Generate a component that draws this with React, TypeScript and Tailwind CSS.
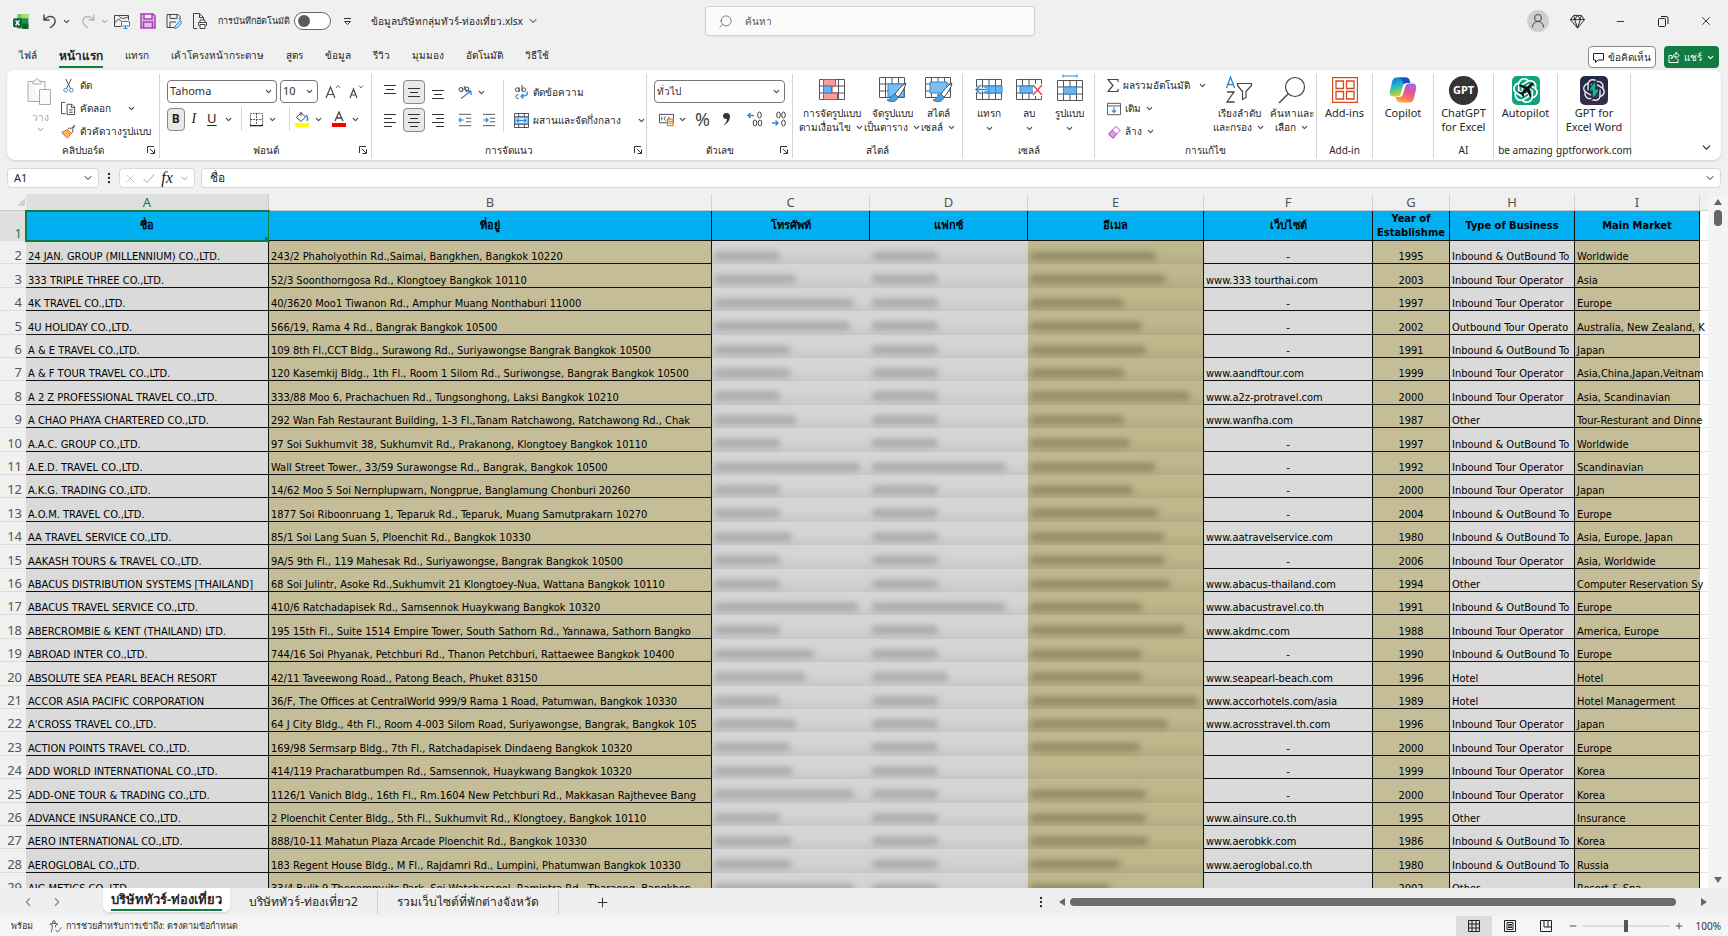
import { useState, type ReactNode } from "react";
import { ChevronDown, ChevronLeft, ChevronRight, Minus, MoreVertical, Plus, Search, X } from "lucide-react";
import { SiOpenai } from "react-icons/si";

type Row = {
  name: string;
  address: string;
  phone: number;
  fax: number;
  email: number;
  web: string;
  year: string;
  type: string;
  market: string;
  spill?: boolean;
};

const BOTH = "Inbound & OutBound To";
const IN = "Inbound Tour Operator";

const row = (
  name: string,
  address: string,
  [phone, fax, email]: [number, number, number],
  web: string,
  year: string,
  type: string,
  market: string,
  spill = false
): Row => ({ name, address, phone, fax, email, web, year, type, market, spill });

// phone / fax / email are hidden, so only the length of the masked value is kept
const ROWS: Row[] = [
  row("24 JAN. GROUP (MILLENNIUM) CO.,LTD.", "243/2 Phaholyothin Rd.,Saimai, Bangkhen, Bangkok 10220", [66, 66, 126], "-", "1995", BOTH, "Worldwide"),
  row("333 TRIPLE THREE CO.,LTD.", "52/3 Soonthorngosa Rd., Klongtoey Bangkok 10110", [82, 66, 136], "www.333 tourthai.com", "2003", IN, "Asia"),
  row("4K TRAVEL CO.,LTD.", "40/3620 Moo1 Tiwanon Rd., Amphur Muang Nonthaburi 11000", [140, 66, 94], "-", "1997", IN, "Europe"),
  row("4U HOLIDAY CO.,LTD.", "566/19, Rama 4 Rd., Bangrak Bangkok 10500", [136, 66, 112], "-", "2002", "Outbound Tour Operato", "Australia, New Zealand, K", true),
  row("A & E TRAVEL CO.,LTD.", "109 8th Fl.,CCT Bldg., Surawong Rd., Suriyawongse Bangrak Bangkok 10500", [76, 66, 116], "-", "1991", BOTH, "Japan"),
  row("A & F TOUR TRAVEL CO.,LTD.", "120 Kasemkij Bldg., 1th Fl., Room 1 Silom Rd., Suriwongse, Bangrak Bangkok 10500", [76, 66, 94], "www.aandftour.com", "1999", IN, "Asia,China,Japan,Veitnam", true),
  row("A 2 Z PROFESSIONAL TRAVEL CO.,LTD.", "333/88 Moo 6, Prachachuen Rd., Tungsonghong, Laksi Bangkok 10210", [66, 66, 160], "www.a2z-protravel.com", "2000", IN, "Asia, Scandinavian"),
  row("A CHAO PHAYA CHARTERED CO.,LTD.", "292 Wan Fah Restaurant Building, 1-3 Fl.,Tanam Ratchawong, Ratchawong Rd., Chak", [82, 66, 94], "www.wanfha.com", "1987", "Other", "Tour-Resturant and Dinne", true),
  row("A.A.C. GROUP CO.,LTD.", "97 Soi Sukhumvit 38, Sukhumvit Rd., Prakanong, Klongtoey Bangkok 10110", [66, 66, 100], "-", "1997", BOTH, "Worldwide"),
  row("A.E.D. TRAVEL CO.,LTD.", "Wall Street Tower., 33/59 Surawongse Rd., Bangrak, Bangkok 10500", [146, 134, 125], "-", "1992", IN, "Scandinavian"),
  row("A.K.G. TRADING CO.,LTD.", "14/62 Moo 5 Soi Nernplupwarn, Nongprue, Banglamung Chonburi 20260", [66, 66, 103], "-", "2000", IN, "Japan"),
  row("A.O.M. TRAVEL CO.,LTD.", "1877 Soi Riboonruang 1, Teparuk Rd., Teparuk, Muang Samutprakarn 10270", [66, 66, 128], "-", "2004", BOTH, "Europe"),
  row("AA TRAVEL SERVICE CO.,LTD.", "85/1 Soi Lang Suan 5, Ploenchit Rd., Bangkok 10330", [78, 66, 134], "www.aatravelservice.com", "1980", BOTH, "Asia, Europe, Japan"),
  row("AAKASH TOURS & TRAVEL CO.,LTD.", "9A/5 9th Fl., 119 Mahesak Rd., Suriyawongse, Bangrak Bangkok 10500", [66, 66, 135], "-", "2006", IN, "Asia, Worldwide"),
  row("ABACUS DISTRIBUTION SYSTEMS [THAILAND]", "68 Soi Julintr, Asoke Rd.,Sukhumvit 21 Klongtoey-Nua, Wattana Bangkok 10110", [66, 66, 140], "www.abacus-thailand.com", "1994", "Other", "Computer Reservation Sy", true),
  row("ABACUS TRAVEL SERVICE CO.,LTD.", "410/6 Ratchadapisek Rd., Samsennok Huaykwang Bangkok 10320", [144, 134, 112], "www.abacustravel.co.th", "1991", BOTH, "Europe"),
  row("ABERCROMBIE & KENT (THAILAND) LTD.", "195 15th Fl., Suite 1514 Empire Tower, South Sathorn Rd., Yannawa, Sathorn Bangko", [66, 66, 155], "www.akdmc.com", "1988", IN, "America, Europe"),
  row("ABROAD INTER CO.,LTD.", "744/16 Soi Phyanak, Petchburi Rd., Thanon Petchburi, Rattaewee Bangkok 10400", [100, 66, 112], "-", "1990", BOTH, "Europe"),
  row("ABSOLUTE SEA PEARL BEACH RESORT", "42/11 Taveewong Road., Patong Beach, Phuket 83150", [92, 76, 112], "www.seapearl-beach.com", "1996", "Hotel", "Hotel"),
  row("ACCOR ASIA PACIFIC CORPORATION", "36/F, The Offices at CentralWorld 999/9 Rama 1 Road, Patumwan, Bangkok 10330", [66, 66, 168], "www.accorhotels.com/asia", "1989", "Hotel", "Hotel Managerment"),
  row("A'CROSS TRAVEL CO.,LTD.", "64 J City Bldg., 4th Fl., Room 4-003 Silom Road, Suriyawongse, Bangrak, Bangkok 105", [82, 66, 138], "www.acrosstravel.th.com", "1996", IN, "Japan"),
  row("ACTION POINTS TRAVEL CO.,LTD.", "169/98 Sermsarp Bldg., 7th Fl., Ratchadapisek Dindaeng Bangkok 10320", [76, 66, 110], "-", "2000", IN, "Europe"),
  row("ADD WORLD INTERNATIONAL CO.,LTD.", "414/119 Pracharatbumpen Rd., Samsennok, Huaykwang Bangkok 10320", [78, 66, 0], "-", "1999", IN, "Korea"),
  row("ADD-ONE TOUR & TRADING CO.,LTD.", "1126/1 Vanich Bldg., 16th Fl., Rm.1604 New Petchburi Rd., Makkasan Rajthevee Bang", [140, 66, 116], "-", "2000", IN, "Korea"),
  row("ADVANCE INSURANCE CO.,LTD.", "2 Ploenchit Center Bldg., 5th Fl., Sukhumvit Rd., Klongtoey, Bangkok 10110", [66, 66, 116], "www.ainsure.co.th", "1995", "Other", "Insurance"),
  row("AERO INTERNATIONAL CO.,LTD.", "888/10-11 Mahatun Plaza Arcade Ploenchit Rd., Bangkok 10330", [78, 66, 118], "www.aerobkk.com", "1986", BOTH, "Korea"),
  row("AEROGLOBAL CO.,LTD.", "183 Regent House Bldg., M Fl., Rajdamri Rd., Lumpini, Phatumwan Bangkok 10330", [78, 66, 90], "www.aeroglobal.co.th", "1980", BOTH, "Russia"),
  row("AIG METICS CO.,LTD.", "33/4 Bulit 9 Thepommuits Park, Soi Watcharapol, Ramintra Rd., Tharaeng, Bangkhen,", [140, 66, 80], "", "2002", "Other", "Resort & Spa"),
];

const HEADERS = ["ชื่อ", "ที่อยู่", "โทรศัพท์", "แฟกซ์", "อีเมล", "เว็บไซต์", "Year of Establishme", "Type of Business", "Main Market"];
const LETTERS = ["A", "B", "C", "D", "E", "F", "G", "H", "I"];
const MENU = ["ไฟล์", "หน้าแรก", "แทรก", "เค้าโครงหน้ากระดาษ", "สูตร", "ข้อมูล", "รีวิว", "มุมมอง", "อัตโนมัติ", "วิธีใช้"];
const SHEETS = ["บริษัททัวร์-ท่องเที่ยว", "บริษัททัวร์-ท่องเที่ยว2", "รวมเว็บไซต์ที่พักต่างจังหวัด"];

type IconProps = { size?: number; className?: string; box?: string; children: ReactNode; w?: number };

const Ic = ({ size = 16, w, className = "", box = "0 0 16 16", children }: IconProps) => (
  <svg width={w ?? size} height={size} viewBox={box} className={`shrink-0 ${className}`} fill="none" stroke="#444" strokeWidth="1" aria-hidden="true">
    {children}
  </svg>
);

const Chev = ({ className = "" }: { className?: string }) => (
  <ChevronDown size={9} strokeWidth={3} className={`shrink-0 text-[#444] ${className}`} aria-hidden="true" />
);

const Btn = ({ label, className = "", children }: { label: string; className?: string; children: ReactNode }) => (
  <button aria-label={label} className={`flex shrink-0 items-center justify-center rounded hover:bg-gray-200 ${className}`}>
    {children}
  </button>
);

const Select = ({ label, value, className = "" }: { label: string; value: string; className?: string }) => (
  <span className={`relative flex items-center ${className}`}>
    <select aria-label={label} className="h-[23px] w-full appearance-none rounded border border-[#777] bg-white px-0.5 text-[#333] outline-none">
      <option>{value}</option>
    </select>
    <Chev className="pointer-events-none absolute right-1" />
  </span>
);

const Group = ({ label, launcher, className = "", children }: { label: string; launcher?: boolean; className?: string; children: ReactNode }) => (
  <section className={`relative flex shrink-0 flex-col border-r border-[#d4d4d4] ${className}`}>
    <div className="min-h-0 flex-1">{children}</div>
    <div className="flex h-4 items-center justify-center whitespace-nowrap text-[10px] leading-4">{label}</div>
    {launcher && (
      <button aria-label={`${label} …`} className="absolute right-1 bottom-1">
        <Ic size={8} box="0 0 8 8">
          <path d="M.5 7V.5H7M3 3l4 4M7.5 3.5v4h-4" stroke="#333" />
        </Ic>
      </button>
    )}
  </section>
);

type BigProps = { icon: ReactNode; lines: string[]; chevron?: boolean; below?: boolean; latin?: boolean; className?: string };

const BigButton = ({ icon, lines, chevron, below, latin, className = "" }: BigProps) => (
  <button className={`flex flex-col items-center rounded leading-[14px] whitespace-nowrap hover:bg-gray-100 ${latin ? "text-[11px]" : "text-[10px]"} ${className}`}>
    <span className="flex h-8 items-center">{icon}</span>
    {lines.map((line, i) => (
      <span key={line} className="flex items-center gap-1">
        {line}
        {chevron && i === lines.length - 1 && <Chev />}
      </span>
    ))}
    {below && <Chev className="mt-1" />}
  </button>
);

const Lines = ({ kind }: { kind: "left" | "center" | "right" | "top" | "middle" | "bottom" }) => {
  const paths = {
    left: "M1 2.5h12M1 6.5h8M1 10.5h12M1 14.5h8",
    center: "M1 2.5h12M3 6.5h8M1 10.5h12M3 14.5h8",
    right: "M1 2.5h12M5 6.5h8M1 10.5h12M5 14.5h8",
    top: "M1 1.5h12M3 5.5h8M1 9.5h12",
    middle: "M1 4.5h12M3 8.5h8M1 12.5h12",
    bottom: "M1 6.5h12M3 10.5h8M1 14.5h12",
  };
  return (
    <Ic size={16} w={14} box="0 0 14 16">
      <path d={paths[kind]} stroke="#333" />
    </Ic>
  );
};

const GridBase = () => <path d="M.5.5h25v20H.5zM.5 7h25M.5 14h25M6.5.5v20M13 .5v20M19.5.5v20" stroke="#555" />;

const Brush = () => (
  <g>
    <path d="M27 6c-4 2-9 8-11 11l3 3c3-3 7-9 8-14z" fill="#fff" stroke="#444" />
    <path d="M16 17c-4 0-3 5-8 6 4 3 10 2 11-3z" fill="#4ba0e0" stroke="#1e7ac4" />
  </g>
);

const CondIcon = () => (
  <Ic size={22} w={26} box="0 0 26 22">
    <GridBase />
    <path d="M4.5.5h12V7h-12zM4.5 14h14v6.500h-14z" fill="#ff9a9a" stroke="#e03c3c" />
    <path d="M4.500 7h8v7h-8z" fill="#6bb5ef" stroke="#2e86d1" />
  </Ic>
);

const TableIcon = () => (
  <Ic size={26} w={28} box="0 0 28 26">
    <GridBase />
    <path d="M9 7h16v13H9z" fill="#7fbdf0" stroke="#2e86d1" />
    <Brush />
  </Ic>
);

const CellStyleIcon = () => (
  <Ic size={26} w={28} box="0 0 28 26">
    <GridBase />
    <path d="M5 5h17v11H5z" fill="#7fbdf0" stroke="#2e86d1" />
    <Brush />
  </Ic>
);

const InsertIcon = () => (
  <Ic size={22} w={28} box="-1 0 28 22">
    <GridBase />
    <path d="M9 7h17v7H9z" fill="#6bb5ef" stroke="#2e86d1" />
    <path d="M13 7v7M19.500 7v7" stroke="#2e86d1" />
    <path d="M10 10.500H0M5 6l-5 4.500L5 15" stroke="#fff" strokeWidth="3" />
    <path d="M10 10.500H0M5 6l-5 4.500L5 15" stroke="#2e86d1" strokeWidth="1.400" />
  </Ic>
);

const DeleteIcon = () => (
  <Ic size={22} w={27} box="0 0 27 22">
    <GridBase />
    <path d="M4 7h12l3 3.500L16 14H4z" fill="#6bb5ef" stroke="#2e86d1" />
    <path d="M17 5h10v12H17z" fill="#fff" stroke="none" />
    <path d="M17 6l9 10M26 6l-9 10" stroke="#f04848" strokeWidth="1.500" />
  </Ic>
);

const FormatIcon = () => (
  <Ic size={28} w={26} box="0 -6 26 28" className="-mt-1">
    <GridBase />
    <path d="M6.500 7h13v7h-13z" fill="#6bb5ef" stroke="#2e86d1" />
    <path d="M6 -4h14M6 -5.500v3M20 -5.500v3" stroke="#2e86d1" />
  </Ic>
);

const CopilotIcon = () => (
  <svg width="28" height="28" viewBox="0 0 28 28" aria-hidden="true">
    <defs>
      <linearGradient id="cpA" x1="0" y1="0" x2="0.300" y2="1">
        <stop offset="0" stopColor="#0a6fd8" />
        <stop offset="0.450" stopColor="#1fb2d6" />
        <stop offset="0.750" stopColor="#6ccf6e" />
        <stop offset="1" stopColor="#f0c419" />
      </linearGradient>
      <linearGradient id="cpB" x1="0.700" y1="0" x2="0.300" y2="1">
        <stop offset="0" stopColor="#a566e8" />
        <stop offset="0.400" stopColor="#e0559b" />
        <stop offset="0.750" stopColor="#fa7a4e" />
        <stop offset="1" stopColor="#ffb03a" />
      </linearGradient>
    </defs>
    <path d="M8 1.500h9c2 0 3 1 3.600 3l.8 2.500h-3.500c-2.200 0-3.300 1-3.900 3l-2.200 7.500c-.6 2-1.600 3-3.300 3H4.600C1.300 20.500.200 18 1 14.800l2-8.800c.7-3 2-4.500 5-4.500z" fill="url(#cpA)" />
    <path d="M8 1.500h9c2 0 3 1 3.600 3l.8 2.500h-3.500c-1.400 0-2.300.4-3 1.200L12.600 4c-.7-1.700-2.300-2.500-4.600-2.500z" fill="#1450c8" />
    <path d="M20 26.500h-9c-2 0-3-1-3.600-3L6.600 21h3.500c2.200 0 3.300-1 3.900-3l2.200-7.500c.6-2 1.600-3 3.300-3h3.900c3.300 0 4.400 2.500 3.600 5.700l-2 8.800c-.7 3-2 4.500-5 4.500z" fill="url(#cpB)" />
  </svg>
);

const AutopilotIcon = () => (
  <span className="relative flex h-[29px] w-7 items-center justify-center rounded-[5px] bg-[#12a37f]">
    <SiOpenai size={25} className="text-white" aria-hidden="true" />
    <svg width="18" height="18" viewBox="6 5.500 16 16" className="absolute" aria-hidden="true">
      <path d="M20.500 7.500c-.7-.7-2-.3-3 .7l-2.300 2.300-6.700-1.800-1 1 5.500 3-2.800 2.900-2-.4-.8.8 2.600 1.500 1.500 2.600.8-.8-.3-2 2.800-2.800 3 5.500 1-1-1.700-6.800 2.300-2.200c1-1 1.700-1.900 1.100-2.500z" fill="#111" />
    </svg>
  </span>
);

const GptWordIcon = () => (
  <span className="relative flex h-[29px] w-7 items-center justify-center rounded-[5px] bg-linear-to-b from-[#1f2a45] to-[#3b2c4a]">
    <SiOpenai size={22} className="text-[#e4e8ee]" aria-hidden="true" />
    <svg width="12" height="22" viewBox="8 3 12 20" className="absolute" aria-hidden="true">
      <path d="M16 4v8l3-1c0 5-2 8-7 11v-8l-3 1c0-5 3-8 7-11z" fill="#18b88a" stroke="#232a45" strokeWidth="1.500" />
    </svg>
  </span>
);

function TitleBar() {
  return (
    <header className="flex h-[42px] shrink-0 items-center">
      <div className="flex flex-1 items-center pl-[13px]">
        <Ic size={17}>
          <path d="M4 1h10.500v4H4z" fill="#5fd068" stroke="none" />
          <path d="M8 1h6.500v5H8z" fill="#a5e06a" stroke="none" />
          <path d="M4 5h10.500v9.500H4z" fill="#1f8f4a" stroke="none" />
          <path d="M9 10h5.500v5H9z" fill="#0f5f30" stroke="none" />
          <rect x="0" y="5" width="8.500" height="8.500" rx="1.500" fill="#0e6b37" stroke="none" />
          <path d="M2.500 7l3.500 4.500M6 7l-3.500 4.500" stroke="#fff" strokeWidth="1.300" />
        </Ic>
        <Btn label="Undo" className="ml-3 h-6 w-4">
          <Ic size={16}>
            <path d="M2 1.500v5.500h5.500M2.300 6.700C5 3.500 9 2.500 11.500 4.500c3 2.500 1.500 6 0 7.500L8 15" strokeWidth="1.400" />
          </Ic>
        </Btn>
        <Btn label="Undo list" className="ml-0.5 h-6 w-3"><Chev /></Btn>
        <Btn label="Redo" className="ml-2 h-6 w-4">
          <Ic size={16}>
            <path d="M14 1.500v5.500H8.500M13.700 6.700C11 3.500 7 2.500 4.500 4.500c-3 2.500-1.500 6 0 7.500L8 15" stroke="#b5b5b5" strokeWidth="1.400" />
          </Ic>
        </Btn>
        <Btn label="Redo list" className="ml-0.5 h-6 w-3"><Chev className="opacity-40" /></Btn>
        <Btn label="Picture" className="ml-1 h-6 w-4">
          <Ic size={16}>
            <path d="M7 13.500H.5V2.500h14V7M.5 10l4-4 3 2.500M5 2.500C6 6 10 6 14 4" />
            <path d="M7.500 8.500h8v4.500h-8zM11.500 13v2M9.500 15.500h4" fill="#fff" stroke="#2e86d1" />
          </Ic>
        </Btn>
        <Btn label="Save" className="ml-2 h-6 w-5">
          <Ic size={16}>
            <path d="M1 1h12l2 2v12H1zM4 1v5h8V1M3.500 15V9h9v6" fill="#e9b8ee" stroke="#a83cb8" strokeWidth="1.500" />
          </Ic>
        </Btn>
        <Btn label="Save as" className="ml-2 h-6 w-4">
          <Ic size={16}>
            <path d="M8 14.500H1v-13h11l2 2V7M4 1.500v4h7v-4M4 14v-5h6" />
            <path d="M14.500 7.500l-5 5-1 3 3-1 4.500-5z" fill="#b9dcf7" stroke="#2e86d1" />
          </Ic>
        </Btn>
        <Btn label="Print preview" className="ml-2 h-6 w-5">
          <Ic size={16}>
            <path d="M5 15.500H1.500V.5h6l4 4V7M7.500.5v4h4" />
            <path d="M7.500 12.500h-1v-3h8v3h-1M8 9V7h5v2M8 11.500h5v4H8z" fill="#fff" />
          </Ic>
        </Btn>
        <label className="ml-2 flex items-center gap-1 whitespace-nowrap text-[9px]">
          การบันทึกอัตโนมัติ
          <input type="checkbox" className="peer sr-only" />
          <span className="flex h-[18px] w-[37px] items-center rounded-full border border-[#666] bg-white px-[3px]">
            <span className="h-3 w-3 rounded-full bg-[#5c5c5c]" />
          </span>
        </label>
        <Btn label="Customize" className="ml-2 h-6 w-4">
          <Ic size={9} box="0 0 9 9"><path d="M1 1.500h7M1.500 4.500l3 3 3-3z" stroke="#333" /></Ic>
        </Btn>
        <button className="ml-4 flex items-center gap-1 whitespace-nowrap text-[10px]">
          ข้อมูลบริษัทกลุ่มทัวร์-ท่องเที่ยว.xlsx
          <ChevronDown size={12} />
        </button>
      </div>
      <label className="ml-[6px] flex h-[30px] w-[330px] shrink items-center gap-3 rounded border border-[#d2d2d2] bg-[#fbfbfb] px-3 shadow-xs">
        <Search size={15} strokeWidth={1.200} className="-scale-x-100 text-[#555]" />
        <input aria-label="ค้นหา" placeholder="ค้นหา" className="min-w-0 flex-1 bg-transparent text-[10px] outline-none placeholder:text-[#555]" />
      </label>
      <div className="flex flex-1 items-center justify-end gap-[13px] pr-[7px]">
        <Btn label="Account" className="size-[22px] rounded-full bg-[#cfcfcf]">
          <Ic size={16}><circle cx="8" cy="5" r="3.500" /><path d="M2.500 14.500c0-8 11-8 11 0" /></Ic>
        </Btn>
        <Btn label="Premium" className="h-7 w-[30px]">
          <Ic size={15}><path d="M4 1.500h8L15.500 6 8 15 .5 6zM.5 6h15M4 1.500L5 6l3 9 3-9 1-4.500M8 1.500L5 6M8 1.500L11 6" stroke="#222" /></Ic>
        </Btn>
        <Btn label="Minimize" className="h-7 w-[30px]"><Minus size={11} strokeWidth={2} /></Btn>
        <Btn label="Restore" className="h-7 w-[30px]">
          <Ic size={11} box="0 0 11 11"><path d="M.5 3.500a1 1 0 0 1 1-1h5a1 1 0 0 1 1 1v6a1 1 0 0 1-1 1h-5a1 1 0 0 1-1-1zM3 .5h5a2 2 0 0 1 2 2V8" stroke="#222" /></Ic>
        </Btn>
        <Btn label="Close" className="h-7 w-[30px]"><X size={14} strokeWidth={1.500} /></Btn>
      </div>
    </header>
  );
}

function MenuBar({ tab, setTab }: { tab: string; setTab: (t: string) => void }) {
  return (
    <nav className="flex h-7 shrink-0 items-end pr-[9px] pb-0.5 pl-[19px]">
      <div className="flex items-center gap-[22px]">
        {MENU.map((m) => (
          <button
            key={m}
            onClick={() => setTab(m)}
            className={`h-[23px] whitespace-nowrap border-b-2 ${m === tab ? "border-[#107c41] text-xs font-bold" : "border-transparent text-[10px]"}`}
          >
            {m}
          </button>
        ))}
      </div>
      <div className="ml-auto flex gap-2 text-[10px] font-medium">
        <button className="flex h-[22px] items-center gap-1 rounded border border-[#8a8a8a] bg-white px-1 whitespace-nowrap">
          <Ic size={11} box="0 0 11 11"><path d="M.5 1.500h10v6.500H5l-2.500 2.500V8h-2z" stroke="#222" /></Ic>
          ข้อคิดเห็น
        </button>
        <button className="flex h-[22px] items-center gap-1 rounded bg-[#107c41] px-1 whitespace-nowrap text-white">
          <Ic size={12} box="0 0 12 12"><path d="M4 4.500H1v7h9V8M3.500 8c0-3 2-4.500 4.500-4.500V1L11 4.500 8 7.500V5.500C6 5.500 4.500 6 3.500 8z" stroke="#fff" /></Ic>
          แชร์
          <ChevronDown size={9} strokeWidth={3} aria-hidden="true" />
        </button>
      </div>
    </nav>
  );
}

function Ribbon() {
  return (
    <div className="mx-[7px] flex h-[90px] shrink-0 overflow-hidden rounded-lg bg-white pt-1 pb-0.5 shadow-sm">
      <Group label="คลิปบอร์ด" launcher className="w-[153px]">
        <div className="flex text-[10px]">
          <button className="flex w-[54px] flex-col items-center pt-1 pl-3 text-[#a8a8a8]">
            <Ic size={28} w={26} box="0 0 26 28">
              <path d="M6 3.500H1v20h11M18 11V3.500h-4.500M6 6V3h2c0-3 4-3 4 0h2v3z" stroke="#aaa" fill="#f7f7f7" />
              <path d="M12.500 11.500h11v15h-11z" stroke="#aaa" fill="#fafafa" />
            </Ic>
            <span className="mt-1">วาง</span>
            <Chev className="opacity-40" />
          </button>
          <div className="flex flex-1 flex-col">
            <button className="flex h-[23px] items-center gap-1 whitespace-nowrap">
              <Ic size={15}>
                <path d="M5 1l5 10M11 1L6 11" />
                <circle cx="5" cy="13" r="2" stroke="#2e86d1" /><circle cx="11" cy="13" r="2" stroke="#2e86d1" />
              </Ic>
              ตัด
            </button>
            <button className="flex h-[23px] items-center gap-1 whitespace-nowrap">
              <Ic size={15}>
                <path d="M5 13.500H.5v-12h4M6.500 3.500h5l3 3v8h-8zM11 3.500v3.500h3.500M8.500 9.500h4M8.500 12h4" />
              </Ic>
              คัดลอก
              <Chev className="ml-3" />
            </button>
            <button className="flex h-[23px] items-center gap-1 whitespace-nowrap">
              <Ic size={15}>
                <path d="M14.500 1.500l-4 3.500-1.500-1-2 2 4 4 2-2-1-1.500z" />
                <path d="M7 6L1 8.500C2 11 4 13 7 15l4-5z" fill="#fbb36b" stroke="#d87414" />
              </Ic>
              ตัวคัดวางรูปแบบ
            </button>
          </div>
        </div>
      </Group>

      <Group label="ฟอนต์" launcher className="w-[212px]">
        <div className="flex flex-col gap-1 px-[7px] pt-[6px]">
          <div className="flex h-[23px] items-center gap-[3px] text-[11px]">
            <Select label="Font" value="Tahoma" className="w-[110px]" />
            <Select label="Font size" value="10" className="w-[38px]" />
            <Btn label="Grow font" className="ml-1 h-5 w-4">
              <Ic size={16}><path d="M1 14L5.500 3 10 14M2.500 10.500h6" strokeWidth="1.200" /><path d="M11 4l2-2.500L15 4" stroke="#2e86d1" /></Ic>
            </Btn>
            <Btn label="Shrink font" className="ml-1 h-5 w-4">
              <Ic size={16}><path d="M2 14L5.500 5 9 14M3.500 11h4" strokeWidth="1.200" /><path d="M11 1.500L13 4l2-2.500" stroke="#2e86d1" /></Ic>
            </Btn>
          </div>
          <div className="flex h-6 items-center">
            <button aria-label="Bold" className="h-[23px] w-[22px] rounded border border-[#888] bg-[#e8e8e8] text-xs font-bold">B</button>
            <button aria-label="Italic" className="w-6 font-['Liberation_Serif',serif] text-sm italic">I</button>
            <button aria-label="Underline" className="w-[22px] text-[13px] underline underline-offset-2">U</button>
            <Chev className="mr-2 ml-1" />
            <span className="h-6 w-px bg-[#d4d4d4]" />
            <Btn label="Borders" className="ml-1.5 h-5 w-4">
              <Ic size={15}><path d="M1.500 14V1.500h13V14M8 1.500v12M1.500 8h13" strokeDasharray="2 1" /><path d="M1 14.500h14" stroke="#222" strokeWidth="1.500" /></Ic>
            </Btn>
            <Chev className="mr-3 ml-1" />
            <span className="h-6 w-px bg-[#d4d4d4]" />
            <Btn label="Fill color" className="ml-1 h-5 w-4">
              <Ic size={16}><path d="M7 1.500L2.500 6.500 7 10.500l4.500-4.500zM7 1v4" /><path d="M12 4c2 2 2 4 1 6" stroke="#2e86d1" strokeWidth="1.500" /><path d="M1 12h14v4H1z" fill="#ff0" stroke="none" /></Ic>
            </Btn>
            <Chev className="mx-1" />
            <Btn label="Font color" className="ml-1 h-5 w-4">
              <Ic size={16}><path d="M4 10l4-9 4 9M5.500 7h5" strokeWidth="1.300" /><path d="M1 12h14v4H1z" fill="#f00" stroke="none" /></Ic>
            </Btn>
            <Chev className="mx-1" />
          </div>
        </div>
      </Group>

      <Group label="การจัดแนว" launcher className="w-[275px]">
        <div className="grid grid-cols-[132px_1fr] pt-[6px]">
          <div className="flex flex-col gap-1 border-r border-[#d4d4d4] pl-[7px]">
            <div className="flex h-6 items-center">
              <Btn label="Top" className="h-6 w-[22px]"><Lines kind="top" /></Btn>
              <Btn label="Middle" className="mx-0.5 h-6 w-[22px] border border-[#888] bg-[#e8e8e8]"><Lines kind="middle" /></Btn>
              <Btn label="Bottom" className="h-6 w-[22px]"><Lines kind="bottom" /></Btn>
              <Btn label="Orientation" className="ml-2 h-6 w-4">
                <Ic size={16}>
                  <circle cx="4" cy="5.500" r="2" /><path d="M6 4.500L5 8" /><path d="M7 2l3 6" /><circle cx="9.800" cy="5" r="2" />
                  <path d="M4 14.500L14 7M14 7h-4M14 7v4" stroke="#2e86d1" strokeWidth="1.300" />
                </Ic>
              </Btn>
              <Chev className="ml-1" />
            </div>
            <div className="flex h-6 items-center">
              <Btn label="Align left" className="h-6 w-[22px]"><Lines kind="left" /></Btn>
              <Btn label="Align center" className="mx-0.5 h-6 w-[22px] border border-[#888] bg-[#e8e8e8]"><Lines kind="center" /></Btn>
              <Btn label="Align right" className="h-6 w-[22px]"><Lines kind="right" /></Btn>
              <Btn label="Decrease indent" className="ml-2 h-6 w-4">
                <Ic size={14}><path d="M1 1.500h14M9 6h6M9 10h6M1 14.500h14" /><path d="M7 8H1M3.500 5.500L1 8l2.500 2.500" stroke="#2e86d1" strokeWidth="1.400" /></Ic>
              </Btn>
              <Btn label="Increase indent" className="ml-2 h-6 w-4">
                <Ic size={14}><path d="M1 1.500h14M9 6h6M9 10h6M1 14.500h14" /><path d="M1 8h6M4.500 5.500L7 8l-2.500 2.500" stroke="#2e86d1" strokeWidth="1.400" /></Ic>
              </Btn>
            </div>
          </div>
          <div className="flex flex-col gap-1 pl-2.5 text-[10px] whitespace-nowrap">
            <button className="flex h-6 items-center gap-1">
              <Ic size={15}>
                <circle cx="3.500" cy="5" r="2" /><path d="M5.500 2.500v5M8.500 0v7" /><circle cx="10.500" cy="5" r="2" /><path d="M5 10.500c-4-1-4 4.500 0 4" />
                <path d="M13.500 7c2 4-1 5-6 5M10 9.500L7.500 12l2.500 2.500" stroke="#2e86d1" strokeWidth="1.400" />
              </Ic>
              ตัดข้อความ
            </button>
            <button className="flex h-6 items-center gap-1">
              <Ic size={15}>
                <path d="M.5.5h15v15H.5zM.5 4h15M.5 12h15M5 .5V4M11 .5V4M5 12v3.500M11 12v3.500" />
                <path d="M1 4.500h14v7H1z" fill="#cfe6fa" stroke="#2e86d1" /><path d="M3 8h10M5 6L3 8l2 2M11 6l2 2-2 2" stroke="#2e86d1" strokeWidth="1.300" />
              </Ic>
              ผสานและจัดกึ่งกลาง
              <Chev className="ml-3" />
            </button>
          </div>
        </div>
      </Group>

      <Group label="ตัวเลข" launcher className="w-[146px]">
        <div className="flex flex-col gap-1 px-[7px] pt-[6px]">
          <Select label="Number format" value="ทั่วไป" className="h-[23px] w-full text-[10px]" />
          <div className="flex h-6 items-center">
            <Btn label="Accounting" className="ml-1 h-5 w-4">
              <Ic size={15}><path d="M.5 2.500h15v9H.5zM3 5v4M7.500 5c-2.500 0-2.500 4 0 4M10.500 5v4" /><path d="M9 7.500h6v7H9zM9 10h6M9 12h6" fill="#fff" stroke="#e8821e" strokeWidth="1.300" /></Ic>
            </Btn>
            <Chev className="ml-1" />
            <button aria-label="Percent" className="ml-2 text-lg leading-5 text-[#444]">%</button>
            <button aria-label="Comma style" className="ml-3">
              <Ic size={14} w={9} box="0 0 9 14"><path d="M4.500 1C2 1 1 2.500 1 4s1 3 3 3l1-.2C5 9 4 11 2 12.500l.5.500C6 11 8 8 8 4.500 8 2 6.500 1 4.500 1z" fill="#333" stroke="none" /></Ic>
            </button>
            <span className="mx-2 h-6 w-px bg-[#d4d4d4]" />
            <Btn label="Increase decimal" className="h-5 w-4">
              <Ic size={16}><path d="M7 4.500H1M3.500 2L1 4.500 3.500 7" stroke="#2e86d1" strokeWidth="1.300" /><ellipse cx="12.500" cy="4" rx="1.800" ry="3" /><ellipse cx="8" cy="12" rx="1.800" ry="3" /><ellipse cx="13" cy="12" rx="1.800" ry="3" /></Ic>
            </Btn>
            <Btn label="Decrease decimal" className="ml-2 h-5 w-4">
              <Ic size={16}><path d="M1 12h6M4.500 9.500L7 12l-2.500 2.500" stroke="#2e86d1" strokeWidth="1.300" /><ellipse cx="7.500" cy="4" rx="1.800" ry="3" /><ellipse cx="12.500" cy="4" rx="1.800" ry="3" /><ellipse cx="12.500" cy="12" rx="1.800" ry="3" /></Ic>
            </Btn>
          </div>
        </div>
      </Group>

      <Group label="สไตล์" className="w-[170px]">
        <div className="flex justify-between px-1.5">
          <BigButton icon={<CondIcon />} lines={["การจัดรูปแบบ", "ตามเงื่อนไข"]} chevron />
          <BigButton icon={<TableIcon />} lines={["จัดรูปแบบ", "เป็นตาราง"]} chevron />
          <BigButton icon={<CellStyleIcon />} lines={["สไตล์", "เซลล์"]} chevron />
        </div>
      </Group>

      <Group label="เซลล์" className="w-[132px]">
        <div className="flex justify-between pr-2.5 pl-3">
          <BigButton icon={<InsertIcon />} lines={["แทรก"]} below />
          <BigButton icon={<DeleteIcon />} lines={["ลบ"]} below />
          <BigButton icon={<FormatIcon />} lines={["รูปแบบ"]} below />
        </div>
      </Group>

      <Group label="การแก้ไข" className="w-[222px]">
        <div className="flex">
          <div className="flex w-[112px] flex-col pl-3 text-[10px] whitespace-nowrap">
            <button className="flex h-[23px] items-center gap-1">
              <Ic size={13} w={12} box="0 0 12 13"><path d="M11 3V.5H1L6 6.500 1 12.500h10V10" strokeWidth="1.200" /></Ic>
              ผลรวมอัตโนมัติ
              <Chev className="ml-auto" />
            </button>
            <button className="flex h-[23px] items-center gap-1">
              <Ic size={14}><path d="M.5 1.500h15v13H.5zM.5 4.500h15" /><path d="M8 6v6M5.500 9.500L8 12l2.500-2.500" stroke="#2e86d1" strokeWidth="1.400" /></Ic>
              เติม <Chev />
            </button>
            <button className="flex h-[23px] items-center gap-1">
              <Ic size={14}><path d="M10 1.500L15 6l-8 9-5-4.500z" fill="#fff" stroke="#a83cb8" /><path d="M6 6l5 4.500-4 4.500-5-4.500z" fill="#d9a0e2" stroke="#a83cb8" /></Ic>
              ล้าง <Chev />
            </button>
          </div>
          <div className="flex flex-1 justify-around pl-1">
            <BigButton
              icon={
                <Ic size={28} w={28} box="0 0 28 28">
                  <path d="M1.500 12L5.500 1l4 11M3 8.500h5" stroke="#2e86d1" strokeWidth="1.300" />
                  <path d="M2 16h7L2 26h7.500" strokeWidth="1.300" />
                  <path d="M12.500 7.500h14v2l-5.500 6v6l-3.500 2v-8l-5-6z" strokeWidth="1.200" />
                </Ic>
              }
              lines={["เรียงลำดับ", "และกรอง"]}
              chevron
            />
            <BigButton
              icon={<Ic size={28} w={28} box="0 0 28 28"><circle cx="17" cy="11" r="9.500" strokeWidth="1.200" /><path d="M10 18L1 27" strokeWidth="1.500" /></Ic>}
              lines={["ค้นหาและ", "เลือก"]}
              chevron
            />
          </div>
        </div>
      </Group>

      <Group label="Add-in" className="w-14">
        <BigButton
          latin
          className="w-full"
          icon={<Ic size={26} w={26} box="0 0 26 26"><path d="M.5.5h25v25H.5zM4 4h7.500v7.500H4zM14.500 4H22v7.500h-7.500zM4 14.500h7.500V22H4zM14.500 14.500H22V22h-7.500z" stroke="#d8481c" strokeWidth="1.300" /></Ic>}
          lines={["Add-ins"]}
        />
      </Group>
      <Group label="" className="w-[61px]">
        <BigButton latin className="w-full" icon={<CopilotIcon />} lines={["Copilot"]} />
      </Group>
      <Group label="AI" className="w-[60px]">
        <BigButton
          latin
          className="w-full"
          icon={<span className="flex size-[29px] items-center justify-center rounded-full bg-[#333] text-[11px] font-bold text-white">GPT</span>}
          lines={["ChatGPT", "for Excel"]}
        />
      </Group>
      <Group label="be amazing" className="w-16">
        <BigButton latin className="w-full" icon={<AutopilotIcon />} lines={["Autopilot"]} />
      </Group>
      <Group label="gptforwork.com" className="w-[73px]">
        <BigButton latin className="w-full" icon={<GptWordIcon />} lines={["GPT for", "Excel Word"]} />
      </Group>
      <Btn label="Collapse ribbon" className="mr-2 mb-1 ml-auto self-end"><ChevronDown size={13} /></Btn>
    </div>
  );
}

function FormulaBar() {
  return (
    <div className="mx-[7px] mt-2 flex h-5 shrink-0 items-center text-xs">
      <div className="flex h-5 w-[92px] items-center rounded border border-[#d8d8d8] bg-white pr-1">
        <input aria-label="Name box" defaultValue="A1" className="min-w-0 flex-1 px-1.5 text-[11px] outline-none" />
        <ChevronDown size={12} />
      </div>
      <MoreVertical size={14} className="mx-[3px]" />
      <div className="flex h-5 w-[76px] items-center justify-between rounded border border-[#d8d8d8] bg-white px-1">
        <X size={13} strokeWidth={1.200} className="text-[#aaa]" />
        <Ic size={12} box="0 0 12 12"><path d="M.5 7L4 10.500 11.500 2" stroke="#aaa" /></Ic>
        <span className="font-['Liberation_Serif',serif] text-base leading-4 italic text-[#222]">fx</span>
        <ChevronDown size={11} strokeWidth={1.500} className="text-[#777]" />
      </div>
      <div className="ml-[6px] flex h-5 flex-1 items-center rounded border border-[#d8d8d8] bg-white pr-1">
        <input aria-label="Formula" defaultValue="ชื่อ" className="min-w-0 flex-1 px-2 outline-none" />
        <ChevronDown size={12} />
      </div>
    </div>
  );
}

const Masked = ({ width, dark }: { width: number; dark?: boolean }) => (
  <span className={`mt-1.5 ml-0.5 block h-2 rounded-sm blur-[3px] ${dark ? "bg-[#8f8760]" : "bg-[#a9a7a9]"}`} style={{ width }} />
);

const maskGray = "bg-linear-to-b from-[#d6d6d6] via-[#d4d4d4] to-[#c8c8c8] p-0";
const maskTan = "bg-linear-to-b from-[#bfb88e] via-[#beb78c] to-[#b2ab83] p-0";
const cell = "overflow-hidden border-r border-b border-[#111] p-0 px-0.5 align-bottom leading-3 whitespace-nowrap";
const gray = "bg-[#dadada]";
const tan = "bg-[#c4bd97]";
const rowHead = "p-0 pr-1 text-right align-bottom font-['Noto_Sans',sans-serif] text-[13px] leading-[15px] font-normal";

function Sheet() {
  return (
    <div className="flex min-h-0 flex-1">
      <div className="min-w-0 flex-1 overflow-hidden">
        <table className="w-full table-fixed border-separate border-spacing-0 font-['DejaVu_Sans_Condensed','DejaVu_Sans',sans-serif] text-[11px] text-black">
          <colgroup>
            <col className="w-[26px]" />
            <col className="w-[243px]" />
            <col className="w-[443px]" />
            <col className="w-[158px]" />
            <col className="w-[158px]" />
            <col className="w-[176px]" />
            <col className="w-[169px]" />
            <col className="w-[77px]" />
            <col className="w-[125px]" />
            <col className="w-[125px]" />
            <col />
          </colgroup>
          <thead className="font-['Noto_Sans',sans-serif] text-[13px] leading-4 text-[#555]">
            <tr className="h-4">
              <th className="border-b border-[#c8c8c8] p-0">
                <Ic size={10} box="0 0 10 10" className="ml-auto"><path d="M9 1v8H1z" fill="#d0d0d0" stroke="none" /></Ic>
              </th>
              {LETTERS.map((l) => (
                <th
                  key={l}
                  scope="col"
                  className={`border-r border-b p-0 font-normal ${l === "A" ? "border-[#c8c8c8] border-b-[#107c41] bg-[#dfdfdf] text-[#107c41]" : "border-[#d4d4d4] border-b-[#c8c8c8]"}`}
                >
                  {l}
                </th>
              ))}
              <th className="border-b border-[#c8c8c8] p-0" />
            </tr>
          </thead>
          <tbody>
            <tr className="h-[30px]">
              <th scope="row" className={`bg-[#dfdfdf] text-[#107c41] ${rowHead}`}>1</th>
              {HEADERS.map((h, i) => (
                <td
                  key={h}
                  className={`relative border-r border-b border-[#111] bg-[#00b0f0] p-0 text-center leading-[14px] font-bold ${
                    i === 0 ? "outline-2 -outline-offset-1 outline-[#107c41]" : ""
                  }`}
                >
                  {h}
                  {i === 0 && <span className="absolute -right-0.5 -bottom-0.5 size-[5px] bg-[#107c41]" />}
                </td>
              ))}
              <td className="border-b border-[#e2e2e2] bg-white" />
            </tr>
            {ROWS.map((r, i) => (
              <tr key={r.name} className="h-[23px] nth-[5n+3]:h-6 nth-[5n]:h-6 nth-[5n+1]:h-[23px]">
                <th scope="row" className={`border-b border-[#dcdcdc] text-[#555] ${rowHead}`}>
                  {i + 2}
                </th>
                <td className={`${cell} ${gray}`}>{r.name}</td>
                <td className={`${cell} ${tan}`}>{r.address}</td>
                <td className={maskGray}><Masked width={r.phone} /></td>
                <td className={maskGray}><Masked width={r.fax} /></td>
                <td className={`border-r border-[#111] ${maskTan}`}><Masked width={r.email} dark /></td>
                <td className={`${cell} ${gray} ${r.web === "-" ? "text-center" : ""}`}>{r.web}</td>
                <td className={`${cell} ${tan} text-center`}>{r.year}</td>
                <td className={`${cell} ${gray}`}>{r.type}</td>
                <td className={`border-b border-[#111] p-0 px-0.5 align-bottom leading-3 whitespace-nowrap ${tan} ${r.spill ? "" : "border-r"}`}>
                  {r.market}
                </td>
                <td className="border-b border-[#e2e2e2] bg-white" />
              </tr>
            ))}
          </tbody>
        </table>
      </div>
      <div className="flex w-5 shrink-0 flex-col items-center bg-[#f4f4f4] pt-1 pb-1">
        <Ic size={8} box="0 0 8 8"><path d="M4 1l4 6H0z" fill="#666" stroke="none" /></Ic>
        <span className="mt-1 h-4 w-2 rounded-full bg-[#666]" />
        <Ic size={8} box="0 0 8 8" className="mt-auto"><path d="M4 7L0 1h8z" fill="#666" stroke="none" /></Ic>
      </div>
    </div>
  );
}

function SheetTabs() {
  const [sheet, setSheet] = useState(SHEETS[0]);
  return (
    <div className="flex h-7 shrink-0 items-center bg-[#efefef] text-xs">
      <Btn label="Previous sheet" className="ml-[21px]"><ChevronLeft size={14} className="text-[#888]" /></Btn>
      <Btn label="Next sheet" className="ml-[15px]"><ChevronRight size={14} className="text-[#888]" /></Btn>
      <div className="ml-[39px] flex h-full items-start">
        {SHEETS.map((s) => (
          <button
            key={s}
            onClick={() => setSheet(s)}
            className={`flex h-6 items-center whitespace-nowrap ${s === sheet ? "rounded-b-md bg-white px-2 text-[13px] font-bold shadow-sm" : "mt-0.5 border-r border-[#d0d0d0] px-[19px]"}`}
          >
            <span className={s === sheet ? "border-b-2 border-[#107c41] leading-5" : ""}>{s}</span>
          </button>
        ))}
      </div>
      <Btn label="New sheet" className="ml-9"><Plus size={15} strokeWidth={1.500} /></Btn>
      <MoreVertical size={14} className="ml-auto" />
      <div className="ml-[10px] flex w-[670px] items-center gap-1 pr-5">
        <Ic size={8} box="0 0 8 8"><path d="M1 4l6-4v8z" fill="#666" stroke="none" /></Ic>
        <span className="h-2 flex-1 rounded-full bg-[#6c6c6c]" />
        <Ic size={8} box="0 0 8 8" className="ml-5"><path d="M7 4L1 0v8z" fill="#666" stroke="none" /></Ic>
      </div>
    </div>
  );
}

function StatusBar() {
  return (
    <footer className="flex h-5 shrink-0 items-center bg-[#f5f5f5] pr-[7px] pl-[11px] text-[9px] text-[#333]">
      <span>พร้อม</span>
      <button className="ml-4 flex items-center gap-1">
        <Ic size={13}>
          <circle cx="6" cy="2.500" r="1.700" />
          <path d="M1 5l3 1.500V10l-1.500 5M11 5L8 6.500V9M1 5c3-1 7-1 10 0M8 12l2.500 3 5-6" />
        </Ic>
        การช่วยสำหรับการเข้าถึง: ตรงตามข้อกำหนด
      </button>
      <div className="ml-auto flex h-full items-center">
        <Btn label="Normal view" className="h-5 w-9 rounded-none bg-[#dcdcdc]">
          <Ic size={12} box="0 0 12 12"><path d="M.5.5h11v11H.5zM.5 4h11M.5 8h11M4 .5v11M8 .5v11" stroke="#222" /></Ic>
        </Btn>
        <Btn label="Page layout" className="h-5 w-9">
          <Ic size={12} box="0 0 12 12"><path d="M.5.5h11v11H.5zM3 2.500h6v7H3zM4 4.500h4M4 6h4M4 7.500h4" stroke="#222" /></Ic>
        </Btn>
        <Btn label="Page break" className="h-5 w-9">
          <Ic size={12} box="0 0 12 12"><path d="M.5.5h11v11H.5zM4 .5v6.500h7.500M8 .5v6.500" stroke="#222" /></Ic>
        </Btn>
        <Minus size={10} className="ml-1" />
        <input
          type="range"
          aria-label="Zoom"
          defaultValue={50}
          className="mx-1 h-3 w-[88px] appearance-none bg-linear-to-b from-transparent from-45% via-[#666] via-50% to-transparent to-55% [&::-webkit-slider-thumb]:h-3 [&::-webkit-slider-thumb]:w-1 [&::-webkit-slider-thumb]:appearance-none [&::-webkit-slider-thumb]:bg-[#555]"
        />
        <Plus size={10} />
        <span className="ml-3 text-[10px]">100%</span>
      </div>
    </footer>
  );
}

export default function App() {
  const [tab, setTab] = useState("หน้าแรก");

  return (
    <div className="flex h-screen flex-col overflow-hidden bg-[#f0f0f0] font-['Noto_Sans',sans-serif] text-[#262626]">
      <TitleBar />
      <MenuBar tab={tab} setTab={setTab} />
      <Ribbon />
      <FormulaBar />
      <div className="flex min-h-0 flex-1 flex-col pt-[6px]">
        <Sheet />
      </div>
      <SheetTabs />
      <StatusBar />
    </div>
  );
}
